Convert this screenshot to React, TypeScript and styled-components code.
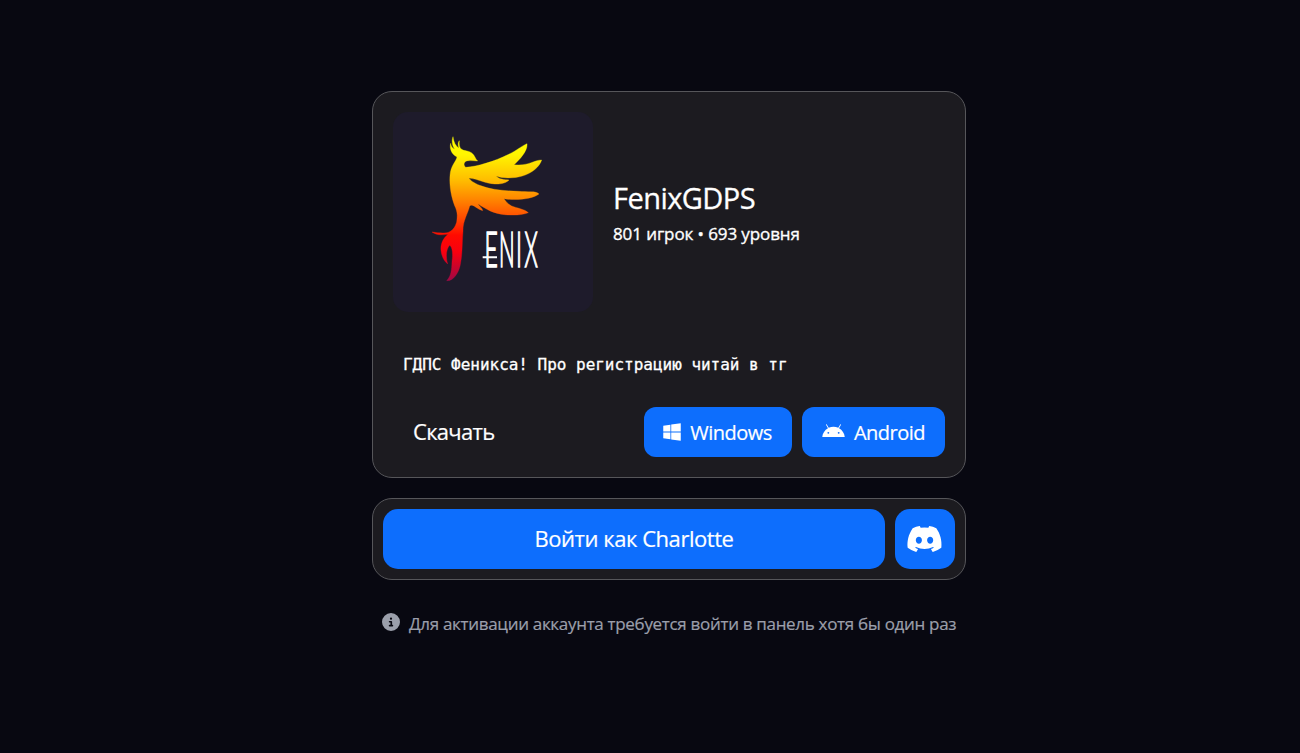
import React from "react";
import styled, { createGlobalStyle } from "styled-components";
import { FaWindows, FaAndroid, FaDiscord, FaCircleInfo } from "react-icons/fa6";

const GlobalStyle = createGlobalStyle`
  * { box-sizing: border-box; }
  body {
    margin: 0;
    background: #080811;
    color: #fff;
    font-family: "Open Sans", "Noto Sans", sans-serif;
  }
`;

const Page = styled.main`
  display: flex;
  flex-direction: column;
  align-items: center;
  gap: 20px;
  min-height: 753px;
  padding: 91px 0 0 38px;
`;

const Card = styled.section<{ $pad: number }>`
  width: 594px;
  padding: ${(p) => p.$pad}px;
  border: 1px solid #56565a;
  border-radius: 20px;
  background: #1c1b20;
`;

const Header = styled.header`
  display: flex;
  align-items: center;
  gap: 20px;
`;

const Titles = styled.div`
  display: flex;
  flex-direction: column;
  gap: 2px;
  padding-top: 5px;
`;

const Logo = styled.svg`
  width: 200px;
  height: 200px;
  flex: none;
  border-radius: 15px;
  background: #1e1b2b;
`;

const Label = styled.span<{ $size: number; $line: number; $track?: number; $stroke?: number }>`
  display: block;
  font-size: ${(p) => p.$size}px;
  line-height: ${(p) => p.$line}px;
  letter-spacing: ${(p) => p.$track ?? 0}px;
  -webkit-text-stroke: ${(p) => p.$stroke ?? 0.2}px currentColor;
  white-space: nowrap;
`;

const Description = styled.p`
  margin: 0;
  padding: 41px 10px 31px;
  font: 16px/23px "DejaVu Sans Mono", monospace;
  letter-spacing: -0.02px;
  -webkit-text-stroke: 0.3px currentColor;
  white-space: pre;
`;

const Downloads = styled.div`
  display: flex;
  align-items: center;
  gap: 10px;
  padding-left: 20px;
`;

const DownloadTitle = styled.div`
  flex: 1;
  padding-bottom: 2px;
`;

const Button = styled.button<{ $width?: number; $height: number; $radius: number; $padding?: string }>`
  display: flex;
  align-items: center;
  justify-content: center;
  gap: 9px;
  flex: ${(p) => (p.$width ? "none" : "1")};
  width: ${(p) => (p.$width ? `${p.$width}px` : "auto")};
  height: ${(p) => p.$height}px;
  padding: ${(p) => p.$padding ?? "0"};
  border: 0;
  border-radius: ${(p) => p.$radius}px;
  background: #0d6efd;
  color: #fff;
  font-family: inherit;
  cursor: pointer;
`;

const Icon = styled.span<{ $w: number; $h: number; $lift?: number }>`
  display: flex;
  flex: none;
  margin-bottom: ${(p) => p.$lift ?? 0}px;
  svg {
    width: ${(p) => p.$w}px;
    height: ${(p) => p.$h}px;
  }
`;

const Actions = styled.div`
  display: flex;
  gap: 10px;
`;

const Note = styled.footer`
  display: flex;
  align-items: center;
  width: 574px;
  gap: 9px;
  padding-top: 11px;
  color: #9b9fab;
`;

const Wordmark = styled.text`
  fill: #fff;
  stroke: #fff;
  stroke-width: 5px;
  font-family: Lato, sans-serif;
  font-size: 150px;
  font-weight: 300;
`;

function PhoenixLogo() {
  return (
    <Logo viewBox="70 72 600 600">
      <defs>
        <linearGradient id="fire" gradientUnits="userSpaceOnUse" x1="0" y1="148" x2="0" y2="580">
          <stop offset="0" stopColor="#ffff00" />
          <stop offset="0.12" stopColor="#fff500" />
          <stop offset="0.3" stopColor="#ffbc00" />
          <stop offset="0.44" stopColor="#ff8200" />
          <stop offset="0.56" stopColor="#ff4b00" />
          <stop offset="0.68" stopColor="#ff0a00" />
          <stop offset="0.8" stopColor="#f70010" />
          <stop offset="1" stopColor="#9c0846" />
        </linearGradient>
      </defs>
      <path
        fill="url(#fire)"
        stroke="url(#fire)"
        strokeWidth="1"
        d="M250 146 C245 158 248 174 255 184 C248 181 244 174 243 166 C239 182 245 198 262 207
        C259 222 243 232 241 262 C238 300 248 338 258 360 C265 378 262 390 261 402
        C256 419 247 431 232 434 C217 436 201 434 187 432 C199 441 214 442 235 439
        C219 452 212 470 214 488 C216 505 223 519 234 528 C228 507 229 484 240 472
        C249 478 250 501 247 520 C246 548 244 564 231 578 C251 580 267 555 272 530
        C279 494 277 464 280 430 C279 398 295 377 300 354 C309 345 319 362 339 368
        C339 361 329 355 325 347 C350 365 374 377 405 380 C431 382 456 382 476 374
        C463 362 442 361 426 354 C416 349 409 341 403 332 C436 338 488 334 508 318
        C501 308 472 313 447 310 C404 308 365 306 330 292 C313 285 301 277 298 270
        C326 273 347 287 375 288 C393 289 410 285 418 276 C405 275 388 274 379 264
        C398 272 437 271 458 264 C487 256 510 236 516 216 C493 216 476 235 433 230
        C452 213 475 187 472 167 C455 174 441 188 417 199 C375 220 322 236 288 238
        C278 229 285 217 298 218 C307 217 315 219 324 219 C314 210 315 193 292 189
        C284 187 280 187 276 184 C269 179 268 170 269 158 C264 164 265 174 268 181
        C258 174 252 162 250 146 Z"
      />
      <Wordmark transform="translate(350 536) scale(0.46 1)">
        <tspan x="-12">E</tspan>
        <tspan x="83" textLength="102" lengthAdjust="spacingAndGlyphs">N</tspan>
        <tspan x="193">I</tspan>
        <tspan x="249" textLength="86" lengthAdjust="spacingAndGlyphs">X</tspan>
      </Wordmark>
      <path d="M339 508H382" stroke="#fff" strokeWidth="6" />
    </Logo>
  );
}

export default function App() {
  return (
    <>
      <GlobalStyle />
      <Page>
        <Card $pad={20}>
          <Header>
            <PhoenixLogo />
            <Titles>
              <Label $size={29} $line={36} $track={-0.55} $stroke={0.3}>FenixGDPS</Label>
              <Label $size={17} $line={32} $track={-0.1} $stroke={0.35}>801 игрок • 693 уровня</Label>
            </Titles>
          </Header>
          <Description>ГДПС Феникса! Про регистрацию читай в тг</Description>
          <Downloads>
            <DownloadTitle>
              <Label $size={22} $line={30} $track={-0.7}>Скачать</Label>
            </DownloadTitle>
            <Button $width={148} $height={50} $radius={12} $padding="2px 1px 0 0">
              <Icon $w={18} $h={20} $lift={2}><FaWindows /></Icon>
              <Label $size={20} $line={28} $track={-0.5}>Windows</Label>
            </Button>
            <Button $width={143} $height={50} $radius={12} $padding="2px 0 0">
              <Icon $w={23} $h={20} $lift={2}><FaAndroid /></Icon>
              <Label $size={20} $line={28} $track={-0.5}>Android</Label>
            </Button>
          </Downloads>
        </Card>
        <Card $pad={10}>
          <Actions>
            <Button $height={60} $radius={15} $padding="0 0 2px">
              <Label $size={22} $line={30} $track={-0.45}>Войти как Charlotte</Label>
            </Button>
            <Button $width={60} $height={60} $radius={15} $padding="0 1px 1px 0" aria-label="Discord">
              <Icon $w={37} $h={30}><FaDiscord /></Icon>
            </Button>
          </Actions>
        </Card>
        <Note>
          <Icon $w={18} $h={18} $lift={4}><FaCircleInfo /></Icon>
          <Label $size={17} $line={25} $track={-0.31}>
            Для активации аккаунта требуется войти в панель хотя бы один раз
          </Label>
        </Note>
      </Page>
    </>
  );
}
